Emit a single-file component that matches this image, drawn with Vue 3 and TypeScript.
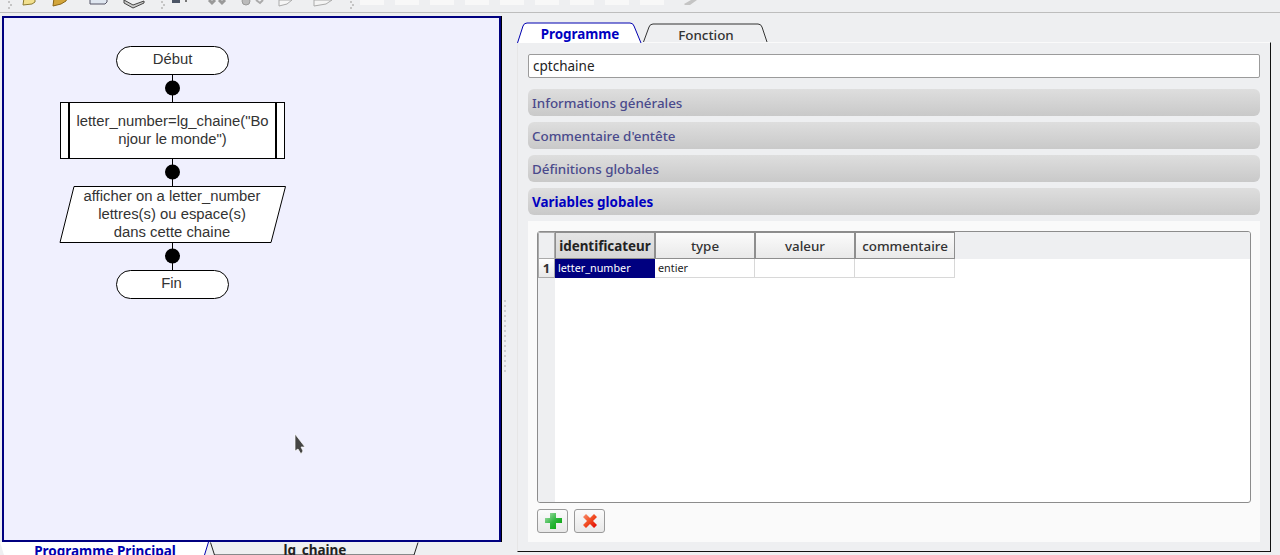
<script setup lang="ts">
const sections = ['Informations générales', "Commentaire d'entête", 'Définitions globales']
const cols = ['type', 'valeur', 'commentaire']
const faint = [360, 395, 430, 465, 500, 535, 570, 605, 640]
const dots = [70, 154, 238]
</script>

<template>
  <div class="app">
    <header class="toolbar">
      <svg class="tb-icons" width="720" height="12" viewBox="0 0 720 12">
        <g fill="#c4c4c4">
          <rect x="8" y="1" width="2" height="2" /><rect x="10" y="4" width="2" height="2" /><rect x="8" y="7" width="2" height="2" />
          <rect x="161" y="1" width="2" height="2" /><rect x="163" y="4" width="2" height="2" /><rect x="161" y="7" width="2" height="2" />
          <rect x="350" y="1" width="2" height="2" /><rect x="352" y="4" width="2" height="2" /><rect x="350" y="7" width="2" height="2" />
        </g>
        <path d="M24 -2h11v4l-3 2-9 1z" fill="#f2e08e" stroke="#8c7a30" />
        <path d="M54 -2h13l-1 3-5 3-8 2z" fill="#d2a53a" stroke="#8a6414" />
        <path d="M90 -3h17v5l-2 2H90z" fill="#dfe6f0" stroke="#556" />
        <path d="M124 0l9 5 11-4v2l-11 5-9-5z" fill="#ccc" stroke="#444" />
        <rect x="172" y="-2" width="8" height="5" fill="#4c5566" />
        <rect x="185" y="0" width="2" height="2" fill="#777" />
        <path d="M209 0l3 3 3-3M219 0l3 3 3-3" fill="none" stroke="#999" stroke-width="3" />
        <circle cx="246" cy="1" r="4" fill="#bbb" stroke="#999" />
        <path d="M256 0l4 3 3-3" fill="none" stroke="#aaa" stroke-width="2" />
        <path d="M279 0h13l-5 4-8 2z" fill="#f6f6f6" stroke="#aaa" />
        <path d="M314 0h18l-6 4-12 2z" fill="#f4f4f4" stroke="#aaa" />
        <g fill="#f8f8f8">
          <rect v-for="x in faint" :key="x" :x="x" y="-3" width="24" height="8" />
        </g>
        <path d="M684 4l7-4h6l-7 5-5 0z" fill="#c4c4c4" />
      </svg>
    </header>

    <main class="workspace">
      <section class="left">
        <div class="canvas">
          <svg class="flow" width="300" height="280" viewBox="0 0 300 280">
            <g stroke="#000" fill="none">
              <line x1="168.5" y1="56" x2="168.5" y2="84" />
              <line x1="168.5" y1="140" x2="168.5" y2="168" />
              <line x1="168.5" y1="224" x2="168.5" y2="252" />
            </g>
            <circle v-for="y in dots" :key="y" cx="168.5" :cy="y" r="7.5" fill="#000" />
          </svg>
          <div class="node terminal start">Début</div>
          <div class="node proc">letter_number=lg_chaine("Bo<br />njour le monde")</div>
          <svg class="para-shape" width="228" height="58" viewBox="0 0 228 58">
            <path d="M15 .5H226.5L212 56.5H1z" fill="#fff" stroke="#000" />
          </svg>
          <div class="node para">afficher on a letter_number<br />lettres(s) ou espace(s)<br />dans cette chaine</div>
          <div class="node terminal end">Fin</div>
          <svg class="cursor" width="14" height="24" viewBox="0 0 14 24">
            <path d="M2 1v17l3-2 3 5 2-3-2-4h4z" fill="#444" stroke="#fff" stroke-width=".7" />
          </svg>
        </div>
        <div class="bottom-tabs">
          <div class="btab active">
            <svg width="209" height="13" viewBox="0 0 209 13"><path d="M0 0L4 13H204.500L208.500 0z" fill="#fff" /><path d="M208.500 0L204.500 13" stroke="#0000b0" fill="none" /></svg>
            <span>Programme Principal</span>
          </div>
          <div class="btab">
            <svg width="209" height="13" viewBox="0 0 209 13"><path d="M.5 .5L4.500 13H204L208 .5" fill="#eeeff1" stroke="#222" /></svg>
            <span>lg_chaine</span>
          </div>
        </div>
      </section>

      <div class="splitter"></div>

      <section class="right">
        <div class="tabs">
          <div class="tab active">
            <svg width="126" height="21" viewBox="0 0 126 21"><path d="M.5 21L6 4q1-3 4-3h103q3 0 4 3l7 17" fill="#fff" stroke="#0000b0" /></svg>
            <span>Programme</span>
          </div>
          <div class="tab">
            <svg width="126" height="19" viewBox="0 0 126 19"><path d="M.5 19L6 4q1-3 4-3h105q3 0 4 3l5 15" fill="#eeeff1" stroke="#333" /></svg>
            <span>Fonction</span>
          </div>
        </div>
        <div class="panel">
          <div class="name">cptchaine</div>
          <div v-for="s in sections" :key="s" class="section">{{ s }}</div>
          <div class="section open">Variables globales</div>
          <div class="content">
            <div class="table">
              <div class="gutter">
                <div class="corner"></div>
                <div class="rownum">1</div>
              </div>
              <div class="tcols">
                <div class="thead">
                  <div class="th current">identificateur</div>
                  <div v-for="c in cols" :key="c" class="th">{{ c }}</div>
                </div>
                <div class="tr">
                  <div class="td selected">letter_number</div>
                  <div class="td">entier</div>
                  <div class="td"></div>
                  <div class="td"></div>
                </div>
              </div>
            </div>
            <div class="actions">
              <button class="icon-btn" aria-label="Ajouter">
                <svg width="18" height="18" viewBox="0 0 18 18">
                  <defs>
                    <linearGradient id="plus" x1="0" y1="0" x2="1" y2="1">
                      <stop offset="0" stop-color="#b4e0b8" /><stop offset=".5" stop-color="#30b840" /><stop offset="1" stop-color="#00a000" />
                    </linearGradient>
                  </defs>
                  <path d="M6 1h6v5h6v5h-6v6H6v-6H1V6h5z" fill="url(#plus)" />
                </svg>
              </button>
              <button class="icon-btn" aria-label="Supprimer">
                <svg width="16" height="16" viewBox="0 0 16 16">
                  <defs>
                    <linearGradient id="cross" x1="0" y1="0" x2="1" y2="1">
                      <stop offset="0" stop-color="#f89070" /><stop offset=".5" stop-color="#f04a20" /><stop offset="1" stop-color="#e00000" />
                    </linearGradient>
                  </defs>
                  <path d="M1 4l3-3 4 4 4-4 3 3-4 4 4 4-3 3-4-4-4 4-3-3 4-4z" fill="url(#cross)" />
                </svg>
              </button>
            </div>
          </div>
        </div>
      </section>
    </main>
  </div>
</template>

<style>
html, body { margin: 0; background: #eeeff1; }
</style>

<style scoped>
.app {
  width: 1280px;
  height: 555px;
  overflow: hidden;
  background: #eeeff1;
  font-family: "Noto Sans", "Open Sans", sans-serif;
  display: flex;
  flex-direction: column;
  color: #2a2a2a;
}
.toolbar {
  height: 12px;
  border-bottom: 1px solid #bdbdbd;
  flex: none;
  overflow: hidden;
}
.tb-icons { display: block; }
.workspace { flex: 1; display: flex; min-height: 0; }
.left {
  width: 502px;
  flex: none;
  padding: 3px 0 0 2px;
  box-sizing: border-box;
  display: flex;
  flex-direction: column;
}
.canvas {
  position: relative;
  width: 499px;
  height: 526px;
  box-sizing: border-box;
  border: 2px solid #000080;
  background: #f0f0fe;
  flex: none;
  box-shadow: 1px 0 0 #000;
  font-family: "Liberation Sans", Arial, sans-serif;
  font-size: 14.85px;
  line-height: 18px;
}
.flow { position: absolute; left: 0; top: 0; }
.node { position: absolute; box-sizing: border-box; text-align: center; color: #333; }
.terminal {
  left: 112px;
  width: 113px;
  height: 29px;
  background: #fff;
  border: 1px solid #000;
  border-radius: 15px;
  line-height: 24px;
}
.start { top: 28px; }
.end { top: 252px; padding-right: 2px; }
.proc {
  left: 56px;
  top: 84px;
  width: 225px;
  height: 57px;
  background: #fff;
  border: 1px solid #000;
  padding: 9px 8px 0;
  white-space: nowrap;
  box-shadow: inset 7px 0 0 #fff, inset 9px 0 0 #000, inset -7px 0 0 #fff, inset -9px 0 0 #000;
}
.para-shape { position: absolute; left: 55px; top: 168px; }
.para { left: 56px; top: 169px; width: 224px; white-space: nowrap; }
.cursor { position: absolute; left: 289px; top: 415px; }
.bottom-tabs {
  display: flex;
  height: 13px;
  font-weight: 700;
  font-size: 13.5px;
  line-height: 17px;
  text-align: center;
  overflow: hidden;
  margin-left: -2px;
  flex: none;
}
.btab { position: relative; width: 210px; height: 13px; color: #222; flex: none; }
.btab svg { position: absolute; left: 0; top: 0; display: block; }
.btab span { position: absolute; left: 0; right: 0; top: 0; white-space: nowrap; }
.btab.active span { color: #0000b0; top: 1px; }
.splitter {
  width: 15px;
  flex: none;
  box-sizing: border-box;
  margin: 287px 0 180px;
  padding: 0 11px 0 2px;
  background: repeating-linear-gradient(#cfcfcf 0 2px, transparent 2px 5px) content-box;
}
.right {
  flex: 1;
  display: flex;
  flex-direction: column;
  min-width: 0;
  padding: 9px 9px 0 0;
}
.tabs { display: flex; height: 20px; flex: none; }
.tab { position: relative; width: 126px; height: 20px; font-weight: 500; font-size: 13.4px; }
.tab svg { position: absolute; left: 0; bottom: 0; display: block; }
.tab span { position: absolute; left: 0; right: 0; top: 5px; text-align: center; line-height: 17px; color: #333; }
.tab.active { z-index: 1; }
.tab.active svg { bottom: -1px; }
.tab.active span { color: #0000c0; font-weight: 700; top: 4px; }
.panel {
  flex: 1;
  background: #eeeff1;
  border-top: 1px solid #fafafa;
  border-right: 1px solid #111;
  border-bottom: 1px solid #111;
  border-left: 1px solid #e6e6e6;
  padding: 11px 10px 9px;
  margin-bottom: 3px;
  display: flex;
  flex-direction: column;
  box-sizing: border-box;
  min-height: 0;
}
.name {
  height: 24px;
  box-sizing: border-box;
  background: #fff;
  border: 1px solid #9b9b9b;
  border-radius: 2px;
  font-size: 13.5px;
  line-height: 22px;
  padding-left: 4px;
  color: #222;
  flex: none;
}
.section {
  height: 27px;
  margin-top: 11px;
  border-radius: 6px;
  background: linear-gradient(#dedede, #c9c9c9);
  color: #4a4a8c;
  font-size: 13.4px;
  font-weight: 500;
  line-height: 29px;
  padding-left: 4px;
  flex: none;
}
.section + .section { margin-top: 6px; }
.section.open { color: #0000c0; font-weight: 700; }
.content {
  flex: 1;
  background: #fafafa;
  margin-top: 6px;
  padding: 10px 9px 9px;
  display: flex;
  flex-direction: column;
  min-height: 0;
}
.table {
  flex: 1;
  display: flex;
  background: #fff;
  border: 1px solid #8c8c8c;
  border-radius: 3px;
  overflow: hidden;
  min-height: 0;
}
.gutter { width: 17px; background: #eeeff1; flex: none; }
.corner { height: 27px; box-sizing: border-box; border: 1px solid #aaa; background: #eeeff1; }
.rownum {
  height: 19px;
  box-sizing: border-box;
  font-weight: 700;
  font-size: 13px;
  line-height: 19px;
  text-align: center;
  color: #333;
  border: 1px solid #aaa;
  border-top: none;
  background: linear-gradient(#fff, #e8e8e8);
}
.tcols { flex: 1; min-width: 0; }
.thead { display: flex; height: 27px; background: #eeeff1; }
.th {
  width: 100px;
  height: 27px;
  box-sizing: border-box;
  border: 1px solid #8e8e8e;
  background: linear-gradient(#fbfbfb, #e9e9e9);
  font-size: 13.4px;
  font-weight: 500;
  line-height: 26px;
  text-align: center;
  color: #333;
}
.th.current { background: linear-gradient(#e4e4e4, #d6d6d6); font-weight: 700; color: #222; white-space: nowrap; }
.tr { display: flex; height: 19px; }
.td {
  width: 100px;
  box-sizing: border-box;
  border-right: 1px solid #d8d8d8;
  border-bottom: 1px solid #d8d8d8;
  font-size: 10.8px;
  line-height: 18px;
  padding-left: 3px;
  color: #222;
}
.td.selected { background: #000080; color: #fff; border-color: #000080; }
.actions { display: flex; gap: 6px; margin-top: 6px; flex: none; }
.icon-btn {
  width: 31px;
  height: 24px;
  box-sizing: border-box;
  border: 1px solid #9a9a9a;
  border-radius: 3px;
  background: linear-gradient(#fbfbfb, #e8e8e8);
  padding: 0;
  display: flex;
  align-items: center;
  justify-content: center;
}
</style>
